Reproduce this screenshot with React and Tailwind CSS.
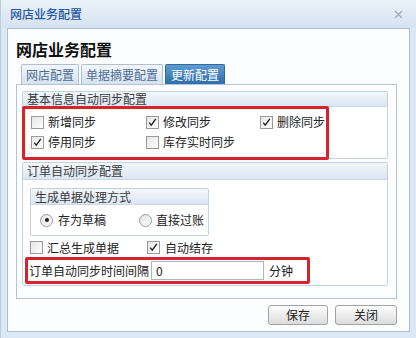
import React from "react";

const font = { fontFamily: '"Noto Sans CJK SC", "Noto Sans", sans-serif' };

function Check({ checked }) {
  return (
    <span className="w-[13px] h-[13px] border border-[#9a9a9a] bg-linear-to-br from-[#e6e6e6] to-[#ffffff] flex items-center justify-center shrink-0">
      {checked && (
        <svg width="11" height="11" viewBox="0 0 11 11">
          <path d="M2.2 5.6 L4.3 8.2 L8.8 1.8" fill="none" stroke="#222" strokeWidth="1.4" />
        </svg>
      )}
    </span>
  );
}

function Radio({ checked }) {
  return (
    <span className="w-[13px] h-[13px] rounded-full border border-[#9a9a9a] bg-linear-to-br from-[#e2e2e2] to-[#ffffff] flex items-center justify-center shrink-0">
      {checked && <span className="w-[4px] h-[4px] rounded-full bg-[#222]" />}
    </span>
  );
}

function CB({ checked, label }) {
  return (
    <div className="flex items-center gap-[4px]">
      <Check checked={checked} />
      <span>{label}</span>
    </div>
  );
}

function GroupHeader({ children, h }) {
  return (
    <div className={`${h} flex items-center pl-[4px] bg-linear-to-b from-[#f3f7fb] to-[#dbe6f2] border-b border-[#c9d6e4] text-[#3a3a3a]`}>
      {children}
    </div>
  );
}

export default function App() {
  return (
    <div style={font} className="w-[416px] h-[338px] bg-[#dde8f5] text-[12px] text-[#222] leading-none overflow-hidden border-l border-[#b9cce0]">
      <div className="h-[28px] flex items-center justify-between pl-[9px] pr-[12px] bg-linear-to-b from-[#eaf1f9] to-[#d6e3f2]">
        <span className="text-[12px] text-[#2658a0] font-medium">网店业务配置</span>
        <svg width="9" height="9" viewBox="0 0 9 9" className="mr-[1px]">
          <path d="M1 1 L8 8 M8 1 L1 8" stroke="#a0a8b2" strokeWidth="1.2" fill="none" />
        </svg>
      </div>
      <div className="ml-[6px] w-[403px] h-[304px] bg-[#fcfdfe] border border-[#a9bdd3]">
        <div className="mt-[8px] h-[24px] flex items-center pl-[8px] text-[16px] font-bold text-[#111]">网店业务配置</div>
        <div className="mt-[3px] h-[20px] flex items-end pl-[13px] gap-[2px]">
          <div className="h-[20px] px-[4px] flex items-center border border-b-0 border-[#aebfd2] bg-linear-to-b from-[#f2f6fb] to-[#d6e2ef] text-[#4d6d93] rounded-t-[2px]">网店配置</div>
          <div className="h-[20px] px-[4px] flex items-center border border-b-0 border-[#aebfd2] bg-linear-to-b from-[#f2f6fb] to-[#d6e2ef] text-[#4d6d93] rounded-t-[2px]">单据摘要配置</div>
          <div className="h-[20px] px-[5px] flex items-center border border-b-0 border-[#2f6aa3] bg-linear-to-b from-[#5d9bd0] to-[#2e6fa9] text-white rounded-t-[2px]">更新配置</div>
        </div>
        <div className="ml-[8px] w-[381px] h-[215px] border border-[#b4c4d6] bg-[#fdfeff] pt-[6px]">
          <div className="ml-[5px] w-[366px] h-[68px] border border-[#c3d1e0] rounded-[2px] bg-white">
            <GroupHeader h="h-[15px]">基本信息自动同步配置</GroupHeader>
            <div className="relative h-[51px] pt-[5px] pl-[8px]">
              <div className="h-[20px] flex items-center">
                <div className="w-[115px]"><CB label="新增同步" /></div>
                <div className="w-[114px]"><CB checked label="修改同步" /></div>
                <div><CB checked label="删除同步" /></div>
              </div>
              <div className="h-[20px] flex items-center">
                <div className="w-[115px]"><CB checked label="停用同步" /></div>
                <div><CB label="库存实时同步" /></div>
              </div>
              <div className="absolute left-[-1px] top-[-1px] w-[307px] h-[54px] border-[3px] border-[#d5242d] rounded-[2px]" />
            </div>
          </div>
          <div className="mt-[3px] ml-[5px] w-[366px] h-[124px] border border-[#c3d1e0] rounded-[2px] bg-white">
            <GroupHeader h="h-[17px]">订单自动同步配置</GroupHeader>
            <div className="mt-[8px] ml-[7px] w-[179px] h-[48px] border border-[#c3d1e0] rounded-[2px]">
              <GroupHeader h="h-[16px]">生成单据处理方式</GroupHeader>
              <div className="h-[30px] flex items-center pl-[9px]">
                <div className="w-[99px] flex items-center gap-[5px]">
                  <Radio checked />
                  <span>存为草稿</span>
                </div>
                <div className="flex items-center gap-[4px]">
                  <Radio />
                  <span>直接过账</span>
                </div>
              </div>
            </div>
            <div className="mt-[2px] h-[19px] flex items-center pl-[7px]">
              <div className="w-[117px]"><CB label="汇总生成单据" /></div>
              <div className="flex items-center gap-[5px]"><Check checked /><span>自动结存</span></div>
            </div>
            <div className="ml-[2px] w-[285px] h-[27px] border-[3px] border-[#d5242d] rounded-[2px] flex items-center pl-[1px]">
              <span className="whitespace-nowrap">订单自动同步时间间隔</span>
              <div className="ml-[2px] w-[113px] h-[19px] border border-[#a7b6c9] bg-white flex items-center pl-[4px]">0</div>
              <span className="ml-[5px]">分钟</span>
            </div>
          </div>
        </div>
        <div className="mt-[6px] flex justify-end gap-[7px] pr-[12px]">
          <div className="w-[60px] h-[20px] border border-[#a3a3a3] rounded-[3px] bg-linear-to-b from-[#fdfdfd] to-[#dcdcdc] flex items-center justify-center">保存</div>
          <div className="w-[62px] h-[20px] border border-[#a3a3a3] rounded-[3px] bg-linear-to-b from-[#fdfdfd] to-[#dcdcdc] flex items-center justify-center">关闭</div>
        </div>
      </div>
    </div>
  );
}
